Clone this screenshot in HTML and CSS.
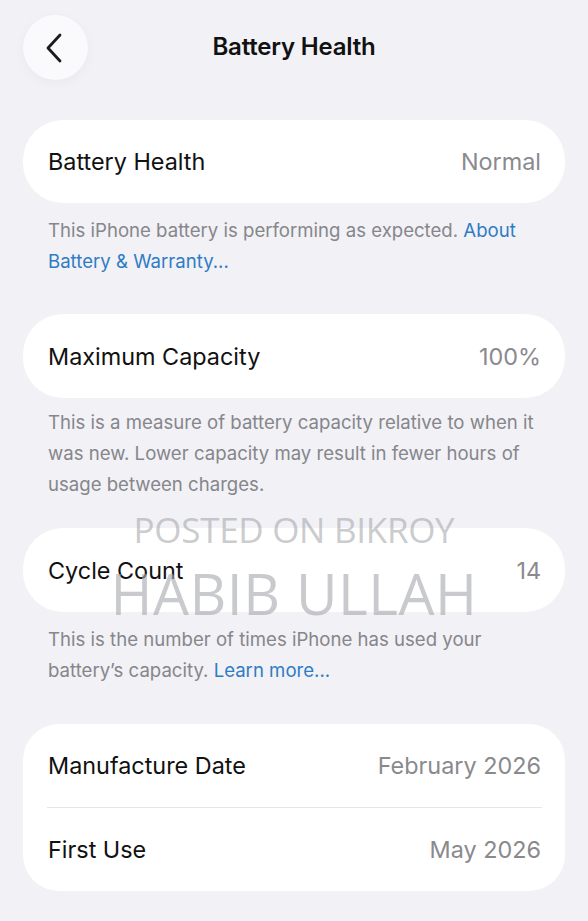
FILE: index.html
```html
<!DOCTYPE html>
<html lang="en">
<head>
    <meta charset="UTF-8">
    <meta name="viewport" content="width=device-width, initial-scale=1.0">
    <title>Battery Health</title>
    <link rel="stylesheet" href="styles.css">
</head>
<body>
    <div class="screen">
        <header class="nav-bar">
            <button class="back-btn" aria-label="Back">
                <svg width="18" height="30" viewBox="0 0 18 30">
                    <path d="M15 2 L3 15 L15 28" fill="none" stroke="#1c1c1e" stroke-width="2.8" stroke-linecap="round" stroke-linejoin="round"/>
                </svg>
            </button>
            <h1 class="nav-title">Battery Health</h1>
        </header>

        <section class="group group-health">
            <div class="card">
                <div class="row">
                    <span class="row-label">Battery Health</span>
                    <span class="row-value">Normal</span>
                </div>
            </div>
            <p class="note">This iPhone battery is performing as expected. <a href="#">About Battery &amp; Warranty...</a></p>
        </section>

        <section class="group group-capacity">
            <div class="card">
                <div class="row">
                    <span class="row-label">Maximum Capacity</span>
                    <span class="row-value">100%</span>
                </div>
            </div>
            <p class="note">This is a measure of battery capacity relative to when it was new. Lower capacity may result in fewer hours of usage between charges.</p>
        </section>

        <section class="group group-cycles">
            <div class="card">
                <div class="row">
                    <span class="row-label">Cycle Count</span>
                    <span class="row-value">14</span>
                </div>
            </div>
            <p class="note">This is the number of times iPhone has used your battery’s capacity. <a href="#">Learn more...</a></p>
        </section>

        <section class="group">
            <div class="card card-list">
                <div class="row">
                    <span class="row-label">Manufacture Date</span>
                    <span class="row-value">February 2026</span>
                </div>
                <div class="row">
                    <span class="row-label">First Use</span>
                    <span class="row-value">May 2026</span>
                </div>
            </div>
        </section>

        <!-- watermark from the listing photo -->
        <div class="watermark">
            <span class="wm-small">POSTED ON BIKROY</span>
            <span class="wm-big">HABIB ULLAH</span>
        </div>
    </div>
</body>
</html>
```

FILE: styles.css
```css
body {
    margin: 0;
    padding: 0;
    background-color: #f1f1f6;
    font-family: 'Inter', 'Noto Sans', sans-serif;
    color: #111;
}

.screen {
    position: relative;
    width: 588px;
    min-height: 921px;
    padding: 0 23px;
    box-sizing: border-box;
}

.nav-bar {
    display: flex;
    align-items: flex-start;
    height: 120px;
    position: relative;
}

.back-btn {
    width: 65px;
    height: 65px;
    margin-top: 15px;
    border: none;
    border-radius: 50%;
    background-color: #fafafc;
    box-shadow: 0 3px 12px rgba(0, 0, 0, 0.04);
    display: flex;
    align-items: center;
    justify-content: center;
    padding: 0 3px 0 0;
    cursor: pointer;
}

.nav-title {
    position: absolute;
    left: 0;
    right: 0;
    top: 32px;
    margin: 0;
    line-height: 30px;
    text-align: center;
    font-size: 24px;
    font-weight: 600;
    letter-spacing: -0.2px;
    pointer-events: none;
}

.card {
    background-color: #fff;
    border-radius: 40px;
}

.card-list {
    border-radius: 36px;
}

.row {
    display: flex;
    justify-content: space-between;
    align-items: center;
    height: 83px;
    padding: 0 24px 0 25px;
    font-size: 23.4px;
}

.card-list .row + .row {
    border-top: 1.5px solid #e6e6ea;
    margin: 0 23px 0 24px;
    padding: 0 1px;
}

.row-label {
    color: #111;
}

.row-value {
    color: #8a8a8e;
}

.note {
    margin: 12px 0 0;
    padding: 0 25px;
    font-size: 18.6px;
    line-height: 31px;
    color: #86868b;
}

.note a {
    color: #2f7cc4;
    text-decoration: none;
}

.group-health {
    margin-bottom: 37px;
}

.group-capacity {
    margin-bottom: 28px;
}

.group-capacity .note {
    margin-top: 9px;
}

.group-capacity .row,
.group-cycles .row {
    height: 84px;
}

.group-cycles {
    margin-bottom: 38px;
}

.watermark {
    position: absolute;
    left: 0;
    right: 0;
    top: 510px;
    display: flex;
    flex-direction: column;
    align-items: center;
    color: rgba(168, 170, 174, 0.62);
    font-family: 'Open Sans', sans-serif;
    pointer-events: none;
}

.wm-small {
    font-size: 35px;
    line-height: 40px;
    letter-spacing: -0.3px;
}

.wm-big {
    font-size: 57px;
    line-height: 62px;
    margin-top: 12px;
    letter-spacing: 0.5px;
}
```
